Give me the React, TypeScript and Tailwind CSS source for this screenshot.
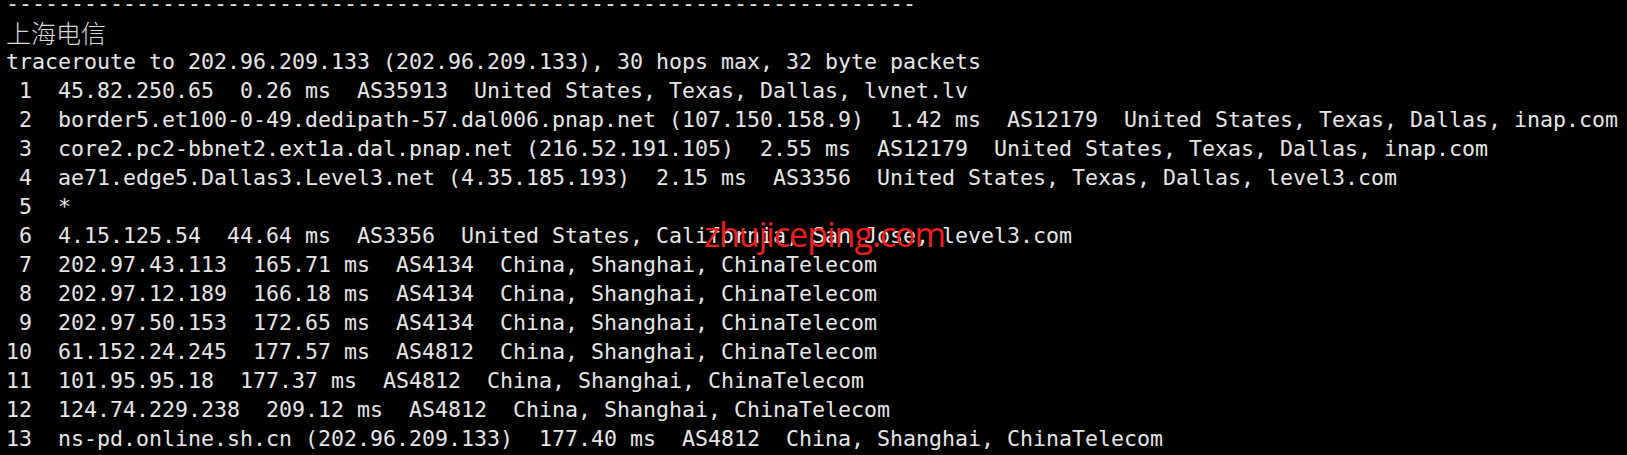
import React from 'react'

const lines = [
    '-'.repeat(70),
    '上海电信',
    'traceroute to 202.96.209.133 (202.96.209.133), 30 hops max, 32 byte packets',
    ' 1  45.82.250.65  0.26 ms  AS35913  United States, Texas, Dallas, lvnet.lv',
    ' 2  border5.et100-0-49.dedipath-57.dal006.pnap.net (107.150.158.9)  1.42 ms  AS12179  United States, Texas, Dallas, inap.com',
    ' 3  core2.pc2-bbnet2.ext1a.dal.pnap.net (216.52.191.105)  2.55 ms  AS12179  United States, Texas, Dallas, inap.com',
    ' 4  ae71.edge5.Dallas3.Level3.net (4.35.185.193)  2.15 ms  AS3356  United States, Texas, Dallas, level3.com',
    ' 5  *',
    ' 6  4.15.125.54  44.64 ms  AS3356  United States, California, San Jose, level3.com',
    ' 7  202.97.43.113  165.71 ms  AS4134  China, Shanghai, ChinaTelecom',
    ' 8  202.97.12.189  166.18 ms  AS4134  China, Shanghai, ChinaTelecom',
    ' 9  202.97.50.153  172.65 ms  AS4134  China, Shanghai, ChinaTelecom',
    '10  61.152.24.245  177.57 ms  AS4812  China, Shanghai, ChinaTelecom',
    '11  101.95.95.18  177.37 ms  AS4812  China, Shanghai, ChinaTelecom',
    '12  124.74.229.238  209.12 ms  AS4812  China, Shanghai, ChinaTelecom',
    '13  ns-pd.online.sh.cn (202.96.209.133)  177.40 ms  AS4812  China, Shanghai, ChinaTelecom',
]

export default function App() {
    return (
        <div className="relative w-[1627px] h-[455px] bg-black overflow-hidden">
            <div className="pl-[6px] mt-[-11px] font-['DejaVu_Sans_Mono','Noto_Sans_CJK_SC',monospace] text-[21.6px] leading-[29px] text-[#e6e6e6]">
                {lines.map((line, i) => (
                    <div key={i} className="whitespace-pre h-[29px]">
                        {i === 1 ? (
                            <span className="font-['Noto_Sans_CJK_SC',sans-serif] text-[25px] font-light text-[#d8d8d8]">{line}</span>
                        ) : (
                            line
                        )}
                    </div>
                ))}
            </div>
            {/* watermark */}
            <div className="absolute left-[704px] top-[214px] font-['Open_Sans',sans-serif] font-medium text-[34px] leading-[40px] tracking-[-1px] text-[#f21c1c]">
                zhujiceping.com
            </div>
        </div>
    )
}
